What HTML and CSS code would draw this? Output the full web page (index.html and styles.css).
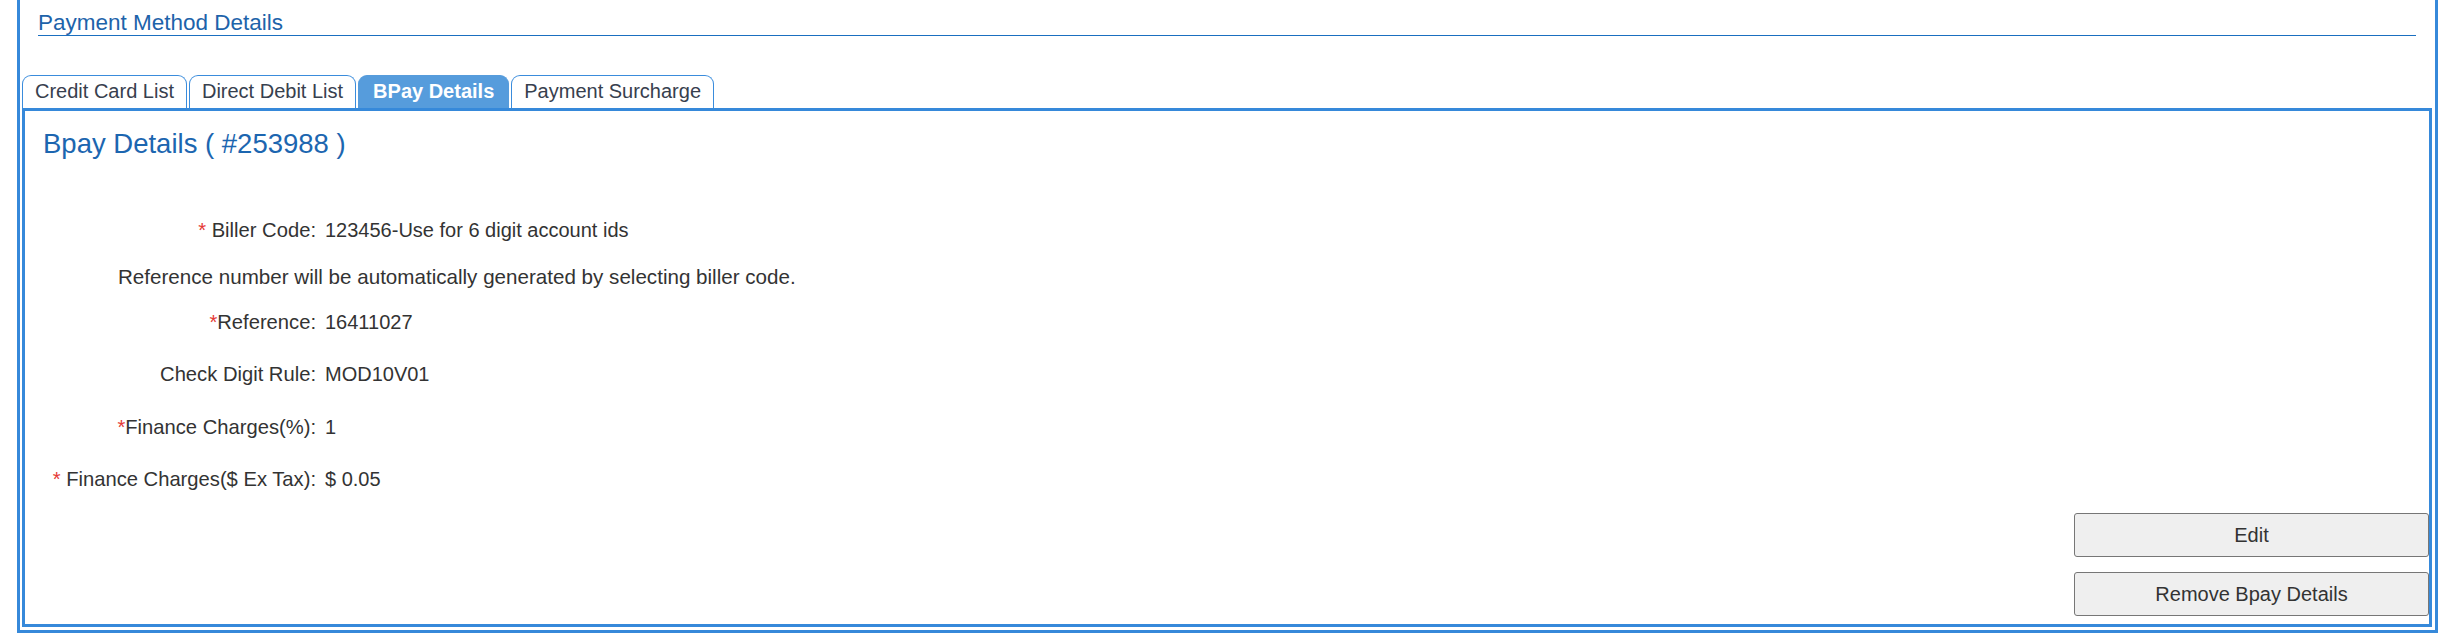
FILE: index.html
```html
<!DOCTYPE html>
<html lang="en">
<head>
<meta charset="utf-8">
<title>Payment Method Details</title>
<link rel="stylesheet" href="styles.css">
</head>
<body>
<div class="frame">
  <div class="section-title">Payment Method Details</div>
  <div class="tabs">
    <div class="tab">Credit Card List</div>
    <div class="tab">Direct Debit List</div>
    <div class="tab active">BPay Details</div>
    <div class="tab">Payment Surcharge</div>
  </div>
  <div class="panel">
    <div class="panel-title">Bpay Details ( #253988 )</div>
    <div class="rows">
      <div class="row r1"><div class="label"><span class="req">*</span> Biller Code:</div><div class="value">123456-Use for 6 digit account ids</div></div>
      <div class="note">Reference number will be automatically generated by selecting biller code.</div>
      <div class="row r3"><div class="label"><span class="req">*</span>Reference:</div><div class="value">16411027</div></div>
      <div class="row r4"><div class="label">Check Digit Rule:</div><div class="value">MOD10V01</div></div>
      <div class="row r5"><div class="label"><span class="req">*</span>Finance Charges(%):</div><div class="value">1</div></div>
      <div class="row r6"><div class="label"><span class="req">*</span> Finance Charges($ Ex Tax):</div><div class="value">$ 0.05</div></div>
    </div>
    <div class="actions">
      <button class="btn" type="button">Edit</button>
      <button class="btn" type="button">Remove Bpay Details</button>
    </div>
  </div>
</div>
</body>
</html>
```

FILE: styles.css
```css
html, body {
  margin: 0;
  padding: 0;
  background: #ffffff;
}
body {
  font-family: "Liberation Sans", Arial, sans-serif;
  font-size: 20px;
  color: #333333;
}
.frame {
  box-sizing: border-box;
  width: 2421px;
  margin-left: 17px;
  border: 3px solid #3689da;
  border-top: none;
  padding: 0 3px 3px 2px;
}
.section-title {
  margin: 0 16px 0 16px;
  padding-top: 11px;
  font-size: 22.5px;
  line-height: 24px;
  color: #1d63aa;
  border-bottom: 1px solid #1a6fc0;
}
.tabs {
  display: flex;
  gap: 2px;
  margin-top: 39px;
}
.tab {
  box-sizing: border-box;
  height: 33px;
  padding: 0 12px 1px 12px;
  line-height: 31px;
  border: 1px solid #3a8cdc;
  border-bottom: none;
  border-radius: 9px 9px 0 0;
  color: #37404e;
  background: #ffffff;
  white-space: nowrap;
}
.tab.active {
  background: #569cdc;
  border-color: #569cdc;
  color: #ffffff;
  font-weight: bold;
  padding: 0 14px 1px 14px;
}
.panel {
  box-sizing: border-box;
  border: 3px solid #3689da;
  padding: 18px 0 8px 18px;
  display: flex;
  flex-direction: column;
}
.panel-title {
  font-size: 27.5px;
  line-height: 30px;
  color: #1c66b0;
}
.rows {
  margin-top: 60px;
  display: flex;
  flex-direction: column;
  margin-left: -18px;
}
.row {
  display: grid;
  grid-template-columns: 291px auto;
  column-gap: 9px;
  line-height: 23px;
}
.label {
  text-align: right;
  white-space: nowrap;
  font-size: 20.2px;
}
.req {
  color: #e53935;
}
.note {
  margin-top: 23px;
  margin-left: 93px;
  line-height: 23px;
  font-size: 20.6px;
}
.r3 { margin-top: 23px; }
.r4 { margin-top: 29px; }
.r5 { margin-top: 30px; }
.r6 { margin-top: 29px; }
.actions {
  margin-top: 22px;
  display: flex;
  flex-direction: column;
  align-items: flex-end;
  gap: 15px;
}
.btn {
  box-sizing: border-box;
  width: 355px;
  height: 44px;
  margin-right: 0;
  background: #efefef;
  border: 1px solid #767676;
  border-radius: 3px;
  font-family: "Liberation Sans", Arial, sans-serif;
  font-size: 20px;
  color: #333333;
  padding: 0;
}
```
